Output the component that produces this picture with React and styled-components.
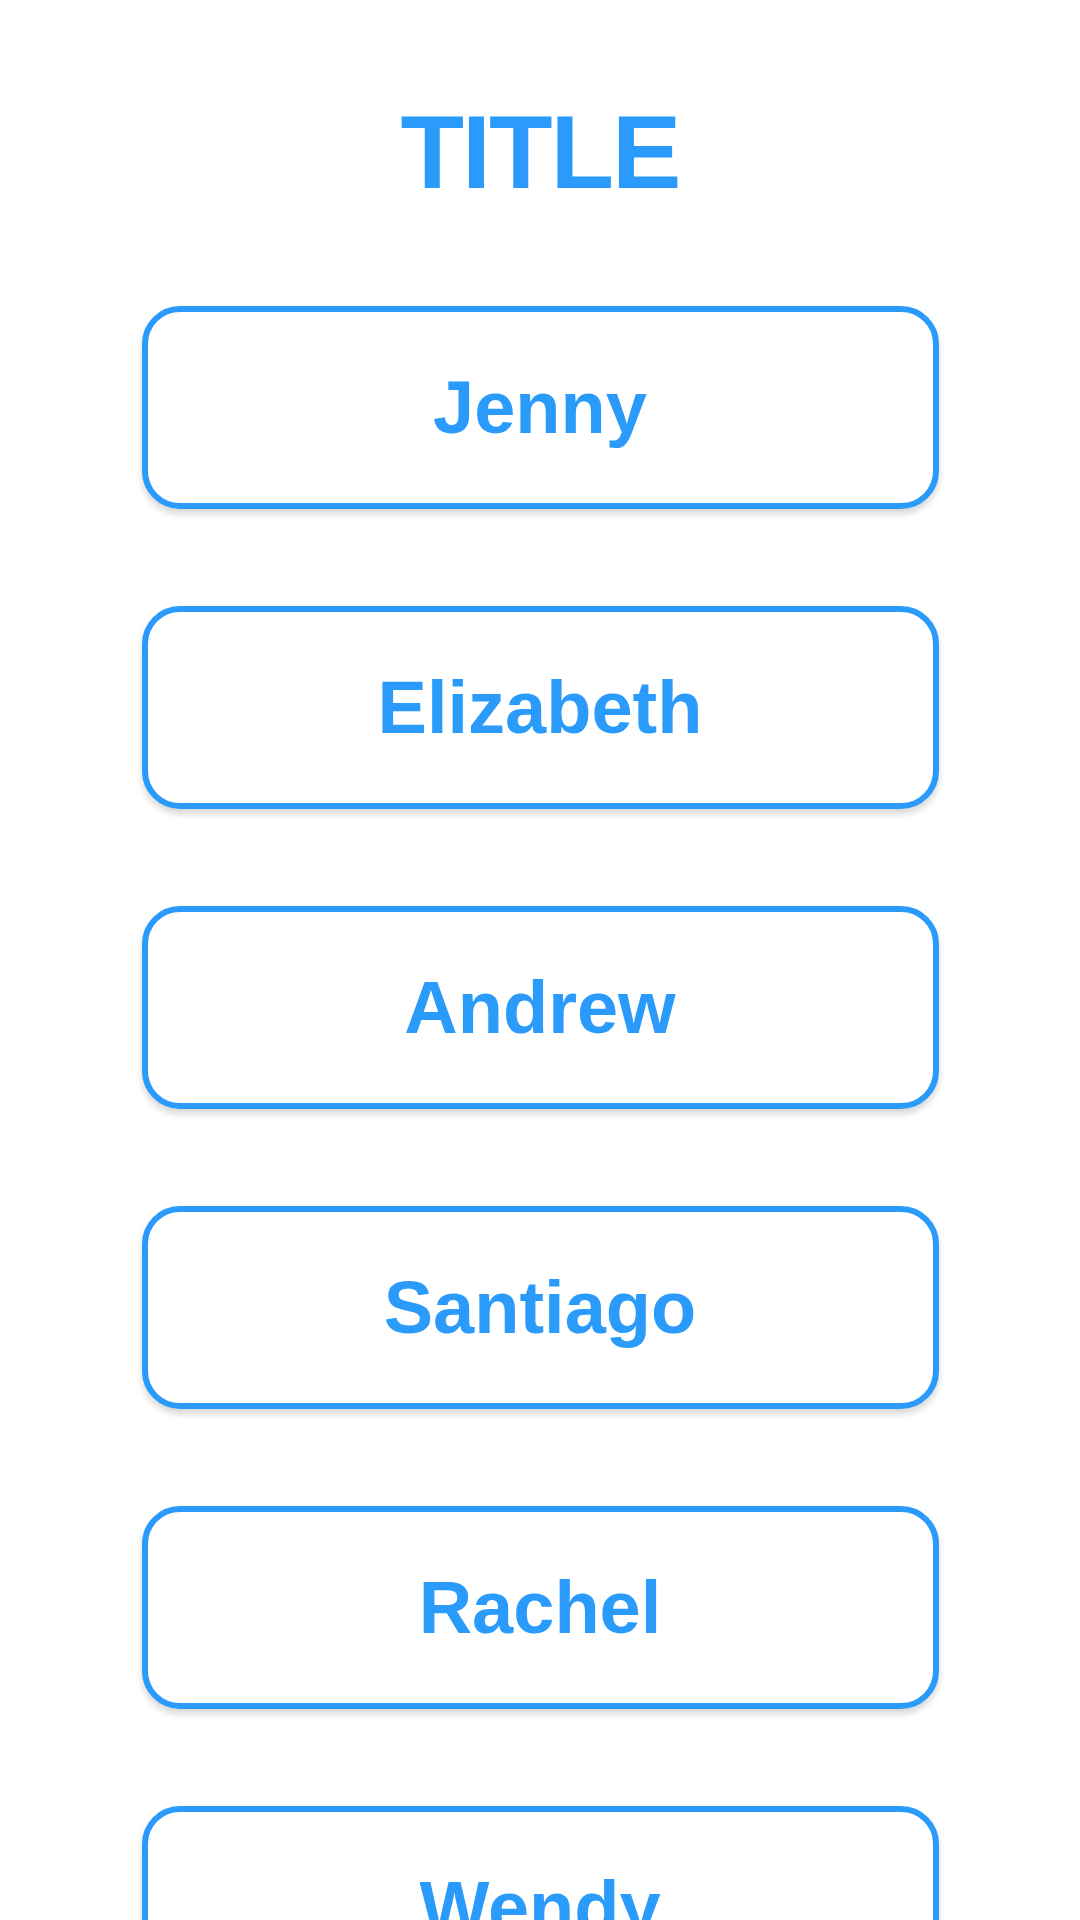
import React from "react";
import styled, { createGlobalStyle } from "styled-components";

const GlobalStyle = createGlobalStyle`
    body {
        margin: 0;
        background: #ffffff;
        font-family: "Liberation Sans", Arial, sans-serif;
    }
`;

const Page = styled.div`
    display: flex;
    flex-direction: column;
    align-items: center;
    padding-top: 100px;
    height: 1920px;
    overflow: hidden;
    box-sizing: border-box;
`;

const Title = styled.h1`
    margin: 0 0 102px;
    font-size: 104px;
    line-height: 1;
    font-weight: 700;
    letter-spacing: -2px;
    color: #2a9bfb;
`;

const List = styled.div`
    display: flex;
    flex-direction: column;
    gap: 97px;
`;

const NameCard = styled.button`
    display: flex;
    align-items: center;
    justify-content: center;
    width: 797px;
    height: 203px;
    box-sizing: border-box;
    border: 6px solid #2a9bfb;
    border-radius: 38px;
    background: #ffffff;
    box-shadow: 0 5px 7px rgba(0, 0, 0, 0.16);
    font-family: "Liberation Sans", Arial, sans-serif;
    font-size: 74px;
    line-height: 1;
    font-weight: 700;
    color: #2a9bfb;
    cursor: pointer;
`;

const names = ["Jenny", "Elizabeth", "Andrew", "Santiago", "Rachel", "Wendy"];

export default function App() {
    return (
        <>
            <GlobalStyle />
            <Page>
                <Title>TITLE</Title>
                <List>
                    {names.map((name) => (
                        <NameCard key={name}>{name}</NameCard>
                    ))}
                </List>
            </Page>
        </>
    );
}
